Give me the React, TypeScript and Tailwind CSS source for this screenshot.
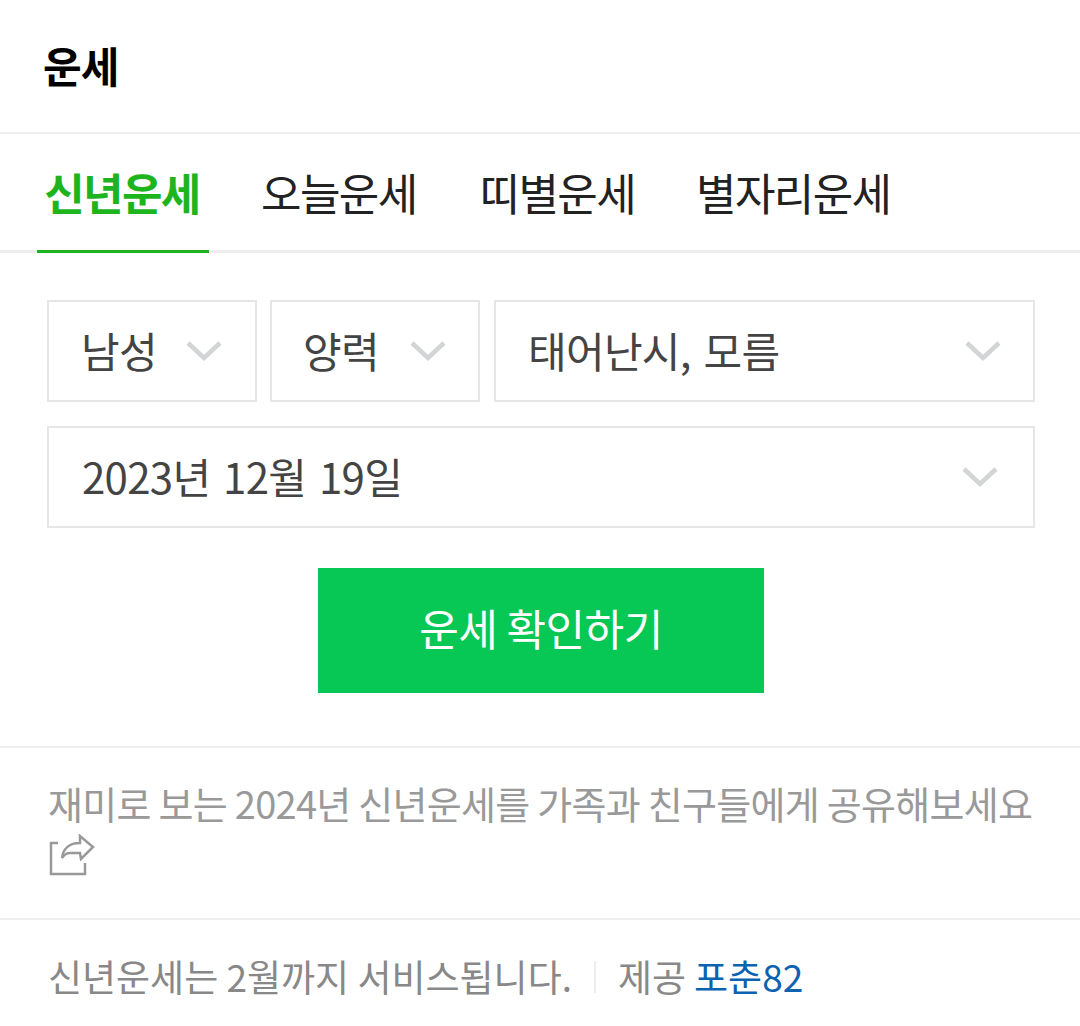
const FONT = "font-['Noto_Sans_CJK_KR','Noto_Sans',sans-serif]";

function Chevron() {
  return (
    <svg width="36" height="22" viewBox="0 0 36 22" fill="none" className="shrink-0">
      <path d="M2 3 L18 18 L34 3" stroke="#d2d4d5" strokeWidth="4.5" />
    </svg>
  );
}

function Select({ label, className }: { label: string; className: string }) {
  return (
    <div className={`flex h-[102px] items-center justify-between border-2 border-[#e6e6e6] text-[42px] tracking-[-0.7px] [word-spacing:4px] text-[#444] ${className}`}>
      <span className="-mt-[4px]">{label}</span>
      <Chevron />
    </div>
  );
}

export default function App() {
  return (
    <div className={`w-[1080px] h-[1026px] overflow-hidden bg-white ${FONT}`}>
      <div className="flex h-[134px] items-center border-b-2 border-[#eee] px-[43px] pb-[4px] text-[42px] font-bold tracking-[-1px] text-black">
        운세
      </div>
      <div className="flex h-[119px] border-b-[3px] border-[#eee] pl-[37px] text-[44px] tracking-[-1.6px] text-[#222]">
        <div className="-mb-[3px] flex h-[119px] w-[172px] items-center justify-center border-b-[3px] border-[#1eb41e] pr-[2px] font-bold text-[#1eb41e]">신년운세</div>
        <div className="ml-[52px] flex items-center">오늘운세</div>
        <div className="ml-[63px] flex items-center">띠별운세</div>
        <div className="ml-[61px] flex items-center">별자리운세</div>
      </div>
      <div className="pl-[47px] pr-[45px] pt-[47px]">
        <div className="flex gap-[13px]">
          <Select label="남성" className="w-[210px] pl-[32px] pr-[33px]" />
          <Select label="양력" className="w-[210px] pl-[31px] pr-[32px]" />
          <Select label="태어난시, 모름" className="ml-[1px] w-[541px] pl-[32px] pr-[32px]" />
        </div>
        <div className="mt-[24px]">
          <Select label="2023년 12월 19일" className="w-[988px] pl-[33px] pr-[35px]" />
        </div>
        <div className="mt-[40px] flex justify-center">
          <div className="flex h-[125px] w-[446px] items-center justify-center bg-[#07c755] pb-[7px] text-[43px] tracking-[-0.5px] text-white">
            운세 확인하기
          </div>
        </div>
      </div>
      <div className="mt-[53px] h-[174px] border-y-2 border-[#eee] px-[48px] pt-[28px] text-[38px] leading-[54px] tracking-[-0.72px] text-[#999]">
        <div className="whitespace-nowrap">재미로 보는 2024년 신년운세를 가족과 친구들에게 공유해보세요</div>
        <svg width="46" height="42" viewBox="0 0 46 42" fill="none" className="mt-[4px] ml-[1px]" stroke="#999" strokeWidth="2.5">
          <path d="M9 9 H2 V40 H36 V29" />
          <path d="M13 24 C14 15 20 9 31 9 V2 L44 13 L32 25 L31 19 H21 C18 19 15 21 13 24 Z" />
        </svg>
      </div>
      <div className="flex items-center pl-[48px] pt-[29px] text-[37px] text-[#888]">
        <span>신년운세는 2월까지 서비스됩니다.</span>
        <span className="mx-[22px] h-[32px] w-[2px] bg-[#eee]" />
        <span>제공</span>
        <span className="ml-[8px] text-[#0b62b0]">포춘82</span>
      </div>
    </div>
  );
}
